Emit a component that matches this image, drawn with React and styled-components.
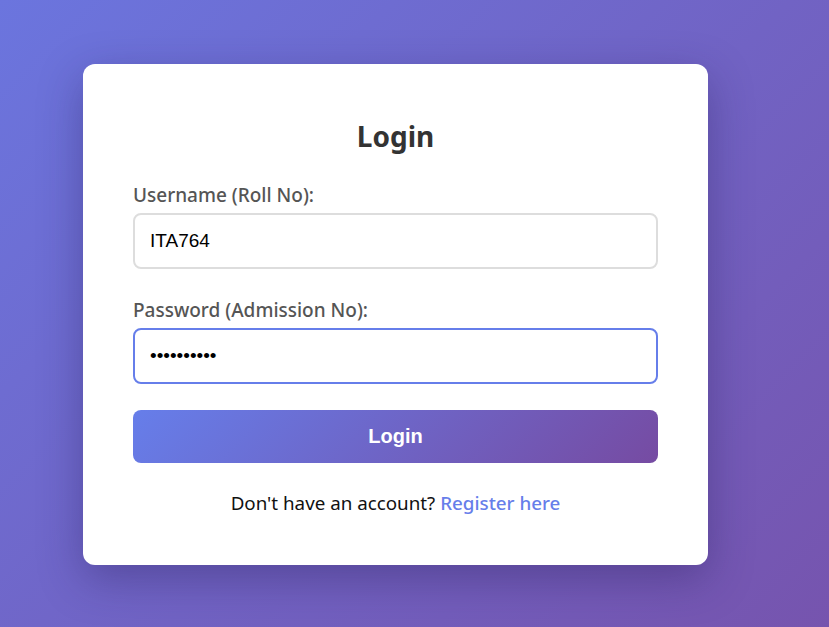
import React, { useState } from 'react';
import styled, { createGlobalStyle } from 'styled-components';

const GlobalStyle = createGlobalStyle`
  * { box-sizing: border-box; }
  body {
    margin: 0;
    font-family: "Noto Sans", "Open Sans", sans-serif;
    background: linear-gradient(135deg, #6b75de 0%, #7654ae 100%);
    min-height: 100vh;
  }
`;

const Page = styled.main`
  min-height: 100vh;
  padding: 64px 0 0 83px;
`;

const Card = styled.section`
  width: 625px;
  background: #fff;
  border-radius: 12px;
  padding: 50px 50px 49px;
  box-shadow: 0 14px 44px rgba(40, 30, 90, 0.38);
`;

const Title = styled.h2`
  margin: 0 0 24px;
  text-align: center;
  color: #333;
  font-size: 28px;
  font-weight: 700;
  line-height: 44px;
`;

const Form = styled.form`
  display: flex;
  flex-direction: column;
`;

const Field = styled.div`
  margin-bottom: ${({ $gap }) => $gap}px;
`;

const Label = styled.label`
  display: block;
  margin-bottom: 5px;
  color: #555;
  font-size: 19px;
  font-weight: 500;
  line-height: 26px;
`;

const Input = styled.input`
  display: block;
  width: 100%;
  height: 56px;
  padding: 0 15px;
  border: 2px solid ${({ $focused }) => ($focused ? '#667eea' : '#ddd')};
  border-radius: 8px;
  font-family: "Liberation Sans", Arial, sans-serif;
  font-size: 19px;
  color: #000;
  outline: none;
  background: #fff;
`;

const Button = styled.button`
  display: block;
  width: 100%;
  height: 53px;
  border: none;
  border-radius: 8px;
  background: linear-gradient(135deg, #667eea 0%, #764ba2 100%);
  color: #fff;
  font-family: "Liberation Sans", Arial, sans-serif;
  font-size: 20px;
  font-weight: 700;
  cursor: pointer;
`;

const Footer = styled.p`
  margin: 27px 0 0;
  text-align: center;
  color: #111;
  font-size: 18.8px;
  line-height: 26px;
`;

const RegisterLink = styled.a`
  color: #667eea;
  font-weight: 500;
  text-decoration: none;
`;

const App = () => {
  const [username, setUsername] = useState('ITA764');
  const [password, setPassword] = useState('ITA764abcd');

  return (
    <>
      <GlobalStyle />
      <Page>
        <Card>
          <Title>Login</Title>
          <Form onSubmit={(e) => e.preventDefault()}>
            <Field $gap={28}>
              <Label htmlFor="username">Username (Roll No):</Label>
              <Input
                id="username"
                value={username}
                onChange={(e) => setUsername(e.target.value)}
              />
            </Field>
            <Field $gap={26}>
              <Label htmlFor="password">Password (Admission No):</Label>
              <Input
                id="password"
                type="password"
                $focused
                value={password}
                onChange={(e) => setPassword(e.target.value)}
              />
            </Field>
            <Button type="submit">Login</Button>
          </Form>
          <Footer>
            Don't have an account? <RegisterLink href="#">Register here</RegisterLink>
          </Footer>
        </Card>
      </Page>
    </>
  );
};

export default App;
